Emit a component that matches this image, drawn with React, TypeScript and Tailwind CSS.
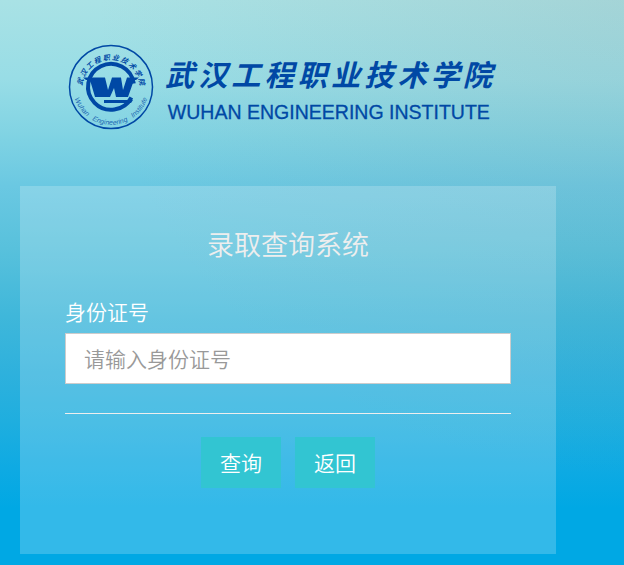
import { useState } from 'react';

const SCHOOL_NAME = '武汉工程职业技术学院';
const SCHOOL_NAME_EN = 'WUHAN ENGINEERING INSTITUTE';

function Emblem() {
  return (
    <svg viewBox="0 0 86 86" className="size-[86px] shrink-0 text-[#0048a5]" role="img" aria-label="Emblem">
      <defs>
        <path id="ring-top" d="M14 45 A29 29 0 1 1 72 45" />
        <path id="ring-bottom" d="M5 43 A38 38 0 0 0 81 43" />
      </defs>
      <circle cx="43" cy="43" r="41.5" fill="none" stroke="currentColor" strokeWidth="1.5" />
      {/* inner ring, open at the right beside the W */}
      <path
        d="M65.8 39.5 A23 23 0 1 0 63.4 53.5"
        fill="none"
        stroke="currentColor"
        strokeWidth="4"
      />
      <text
        fill="currentColor"
        fontSize="7"
        fontWeight="700"
        fontStyle="italic"
        textAnchor="middle"
        fontFamily="'Noto Sans CJK SC', sans-serif"
      >
        <textPath href="#ring-top" startOffset="50%">
          {SCHOOL_NAME.split('').join(' ')}
        </textPath>
      </text>
      <text
        fill="currentColor"
        fillOpacity="0.8"
        fontSize="7"
        fontStyle="italic"
        textAnchor="middle"
        fontFamily="'Liberation Sans', sans-serif"
      >
        <textPath href="#ring-bottom" startOffset="50%">
          Wuhan &#160; Engineering &#160; Institute
        </textPath>
      </text>
      <path
        fill="currentColor"
        d="M15 33.5 H37 L40 46 L44 33.5 H53 L55 46 L59 33.5 H71 L68 36 H66 L60 53 H48 L46 44 L42 53 H27 L22 36 H18 Z"
      />
      <path fill="currentColor" d="M36 56 H65 L63 59 H36 Z" />
    </svg>
  );
}

function Logo() {
  return (
    <header className="flex items-center gap-2">
      <Emblem />
      <svg viewBox="0 0 344 88" className="h-[86px] w-[336px] shrink-0 text-[#0048a5]">
        <text
          x="3 37 71 105 139 173 207 241 275 308"
          y="43"
          fill="currentColor"
          fontSize="30"
          fontWeight="700"
          fontStyle="italic"
          fontFamily="'Noto Sans CJK SC', sans-serif"
        >
          {SCHOOL_NAME}
        </text>
        <text
          x="6"
          y="77"
          fill="currentColor"
          stroke="currentColor"
          strokeWidth="0.3"
          fontSize="20"
          fontFamily="'Liberation Sans', Arial, sans-serif"
        >
          {SCHOOL_NAME_EN}
        </text>
      </svg>
    </header>
  );
}

function App() {
  const [idNumber, setIdNumber] = useState('');

  return (
    <main className="min-h-screen bg-[radial-gradient(ellipse_at_top_right,#8c8c8c28,#8c8c8c00_60%),linear-gradient(180deg,#a9e2e5_0%,#98dde6_14%,#80d3e3_24%,#6ac8e2_33%,#58c1dc_44%,#3fb7da_56%,#2eb1dd_66%,#1eaedf_75%,#0eaae3_83%,#00a8e4_90%,#00a8e4_100%)] pt-11 pr-17 pb-[11px] pl-5 font-['Noto_Sans_CJK_SC',sans-serif]">
      <div className="pl-12">
        <Logo />
      </div>

      <form
        onSubmit={(e) => e.preventDefault()}
        className="mt-14 bg-white/20 px-[45px] pt-[38px] pb-[66px]"
      >
        <h1 className="text-center text-[27px] leading-10 font-[350] text-[#eeeeee]">录取查询系统</h1>
        <label htmlFor="id-number" className="mt-[33px] block text-[21px] leading-7 font-[350] text-white">
          身份证号
        </label>
        <input
          id="id-number"
          type="text"
          value={idNumber}
          onChange={(e) => setIdNumber(e.target.value)}
          placeholder="请输入身份证号"
          className="mt-2 block h-[51px] w-full border border-[#cccccc] bg-white px-[18px] pb-0.5 text-[21px] font-[350] text-gray-700 placeholder:text-[#999999]"
        />
        <hr className="mt-[29px] border-[#eeeeee]" />
        <div className="mt-[23px] flex justify-center gap-3.5">
          <button type="submit" className="h-[51px] w-20 bg-[#32c5d2] text-[21px] font-[350] text-white">
            查询
          </button>
          <button type="button" className="h-[51px] w-20 bg-[#32c5d2] text-[21px] font-[350] text-white">
            返回
          </button>
        </div>
      </form>
    </main>
  );
}

export default App;
